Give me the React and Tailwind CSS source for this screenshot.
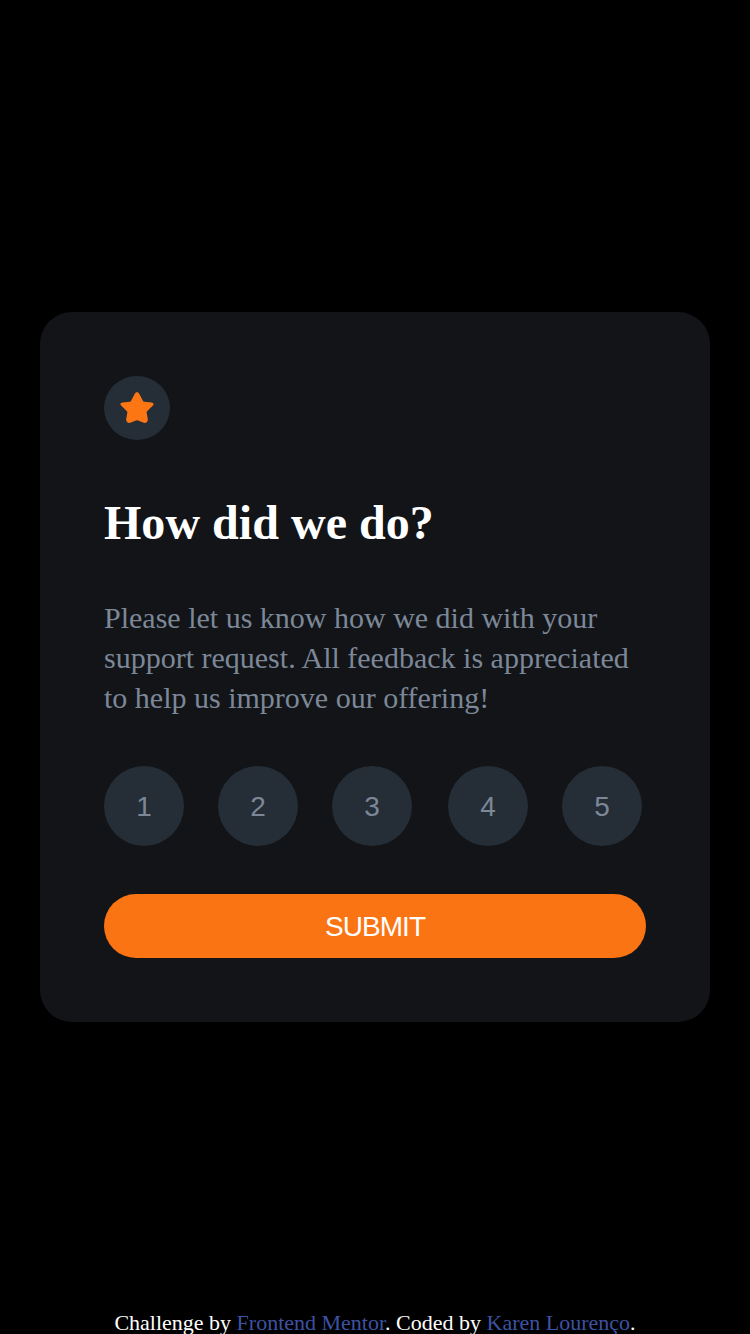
const ratings = [
  { value: 1, gap: "" },
  { value: 2, gap: "ml-[34px]" },
  { value: 3, gap: "ml-[34px]" },
  { value: 4, gap: "ml-9" },
  { value: 5, gap: "ml-[34px]" },
];

function Star() {
  return (
    <svg className="h-8 w-[34px]" viewBox="0 0 34 32">
      <path
        d="M14.9 1.5Q17-1.5 19.1 1.5L22.9 8.8Q23.3 9.6 24.2 9.7L31.8 10.5Q34.8 11.3 32.9 13.6L27.1 19.3Q26.5 19.9 26.7 20.8L27.9 27.8Q27.4 31.4 23.8 30.8L18 28.4Q17 28 16 28.4L10.2 30.8Q6.6 31.4 6.1 27.8L7.3 20.8Q7.5 19.9 6.9 19.3L1.1 13.6Q-.8 11.3 2.2 10.5L9.8 9.7Q10.7 9.6 11.1 8.8Z"
        fill="#FC7614"
      />
    </svg>
  );
}

export default function App() {
  return (
    <div className="flex h-[1334px] flex-col overflow-hidden bg-black px-10 pt-[312px] font-['Liberation_Serif',serif]">
      <main className="h-[710px] w-[670px] shrink-0 rounded-[32px] bg-[#121417] px-16 pt-16">
        <div className="flex h-16 w-[66px] items-center justify-center rounded-[50%] bg-[#252d37]">
          <Star />
        </div>
        <h1 className="mt-[55px] text-[48px] leading-[55px] font-bold tracking-[0.03px] text-white">How did we do?</h1>
        <p className="mt-12 text-[30px] leading-10 whitespace-nowrap text-[#7c8798]">
          Please let us know how we did with your
          <br />
          support request. All feedback is appreciated
          <br />
          to help us improve our offering!
        </p>
        <div className="mt-12 flex font-['Liberation_Sans',sans-serif]">
          {ratings.map(({ value, gap }) => (
            <button
              key={value}
              className={`size-20 rounded-full bg-[#252d37] pt-0.5 text-[28px] leading-8 text-[#7c8798] ${gap}`}
            >
              {value}
            </button>
          ))}
        </div>
        <button className="mt-12 h-16 w-[542px] rounded-[32px] bg-[#fb7413] pt-0.5 font-['Liberation_Sans',sans-serif] text-[28px] leading-8 tracking-[-0.95px] text-white">
          SUBMIT
        </button>
      </main>
      <footer className="mt-auto h-6 text-center text-[22px] leading-[25px] text-white">
        Challenge by <a className="text-[#3e52a3]">Frontend Mentor</a>. Coded by{" "}
        <a className="text-[#3e52a3]">Karen Lourenço</a>.
      </footer>
    </div>
  );
}
